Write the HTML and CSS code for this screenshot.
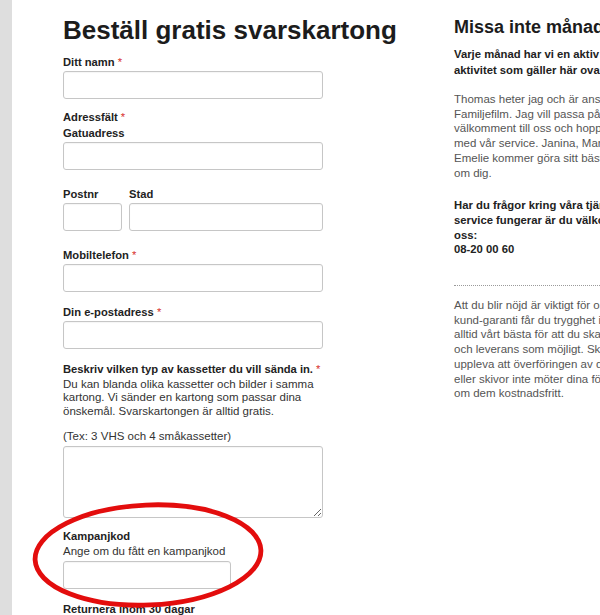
FILE: index.html
```html
<!DOCTYPE html>
<html lang="sv">

<head>
    <meta charset="UTF-8">
    <meta name="viewport" content="width=device-width, initial-scale=1.0">
    <title>Beställ gratis svarskartong</title>
    <link rel="stylesheet" href="styles.css">
</head>

<body>
    <div class="page">

        <!-- Formulär -->
        <div class="form-col">
            <h1>Beställ gratis svarskartong</h1>
            <form>
                <div class="field">
                    <label for="namn">Ditt namn <span class="req">*</span></label>
                    <input type="text" id="namn" class="wide">
                </div>

                <div class="field field-address">
                    <label>Adressfält <span class="req">*</span></label>
                    <label for="gata" class="sub-label">Gatuadress</label>
                    <input type="text" id="gata" class="wide">
                </div>

                <div class="field field-row">
                    <div class="col">
                        <label for="postnr">Postnr</label>
                        <input type="text" id="postnr" class="short">
                    </div>
                    <div class="col">
                        <label for="stad">Stad</label>
                        <input type="text" id="stad" class="city">
                    </div>
                </div>

                <div class="field field-mobile">
                    <label for="mobil">Mobiltelefon <span class="req">*</span></label>
                    <input type="text" id="mobil" class="wide">
                </div>

                <div class="field field-email">
                    <label for="epost">Din e-postadress <span class="req">*</span></label>
                    <input type="text" id="epost" class="wide">
                </div>

                <div class="field">
                    <label for="kassetter">Beskriv vilken typ av kassetter du vill sända in. <span class="req">*</span></label>
                    <p class="help">Du kan blanda olika kassetter och bilder i samma kartong. Vi sänder en kartong som passar dina önskemål. Svarskartongen är alltid gratis.</p>
                    <p class="help help-example">(Tex: 3 VHS och 4 småkassetter)</p>
                    <textarea id="kassetter"></textarea>
                </div>

                <div class="field field-campaign">
                    <label for="kampanj">Kampanjkod</label>
                    <p class="help help-hint">Ange om du fått en kampanjkod</p>
                    <input type="text" id="kampanj" class="code">

                    <!-- Röd markering runt kampanjkoden -->
                    <svg class="circle-mark" width="236" height="110" viewBox="0 0 236 110">
                        <ellipse cx="117" cy="55" rx="113" ry="50" fill="none" stroke="#e30d0d" stroke-width="4.8" transform="rotate(-2.5 117 55)" />
                    </svg>
                </div>

                <div class="field">
                    <label for="retur">Returnera inom 30 dagar</label>
                    <input type="text" id="retur" class="wide">
                </div>
            </form>
        </div>

        <!-- Sidokolumn -->
        <div class="side-col">
            <h2>Missa inte månadens erbjudande</h2>
            <p class="lead">Varje månad har vi en aktiv kampanj eller en<br>aktivitet som gäller här ovan.</p>
            <p class="text">Thomas heter jag och är ansvarig för<br>Familjefilm. Jag vill passa på att hälsa dig<br>välkomment till oss och hoppas att du blir nöjd<br>med vår service. Janina, Maria och<br>Emelie kommer göra sitt bästa för att ta hand<br>om dig.</p>
            <p class="lead contact">Har du frågor kring våra tjänster eller hur vår<br>service fungerar är du välkommen att kontakta<br>oss:<br>08-20 00 60</p>
            <div class="guarantee">
                <p class="text">Att du blir nöjd är viktigt för oss. Med vår<br>kund-garanti får du trygghet i att vi gör<br>alltid vårt bästa för att du skall få så bra kvalitet<br>och leverans som möjligt. Skulle du<br>uppleva att överföringen av dina kassetter<br>eller skivor inte möter dina förväntningar gör vi<br>om dem kostnadsfritt.</p>
            </div>
        </div>

    </div>
</body>

</html>
```

FILE: styles.css
```css
html,
body {
    margin: 0;
    height: 100%;
    overflow: hidden;
}

body {
    background-color: #dedede;
    font-family: "Liberation Sans", Arial, sans-serif;
    color: #222;
}

.page {
    display: flex;
    margin-left: 12px;
    padding-left: 51px;
    min-height: 100%;
    background-color: #fff;
}

/* Formulär */
.form-col {
    width: 370px;
    flex-shrink: 0;
}

    .form-col h1 {
        margin: 15px 0 10px;
        font-size: 26px;
        line-height: 30px;
        color: #1c1c1c;
    }

.field {
    margin-bottom: 11px;
}

    .field label {
        display: block;
        margin-bottom: 2px;
        font-size: 11.2px;
        line-height: 14px;
        font-weight: bold;
        color: #222;
    }

    .field .sub-label {
        margin-top: 2px;
    }

.req {
    color: #d8332f;
    font-weight: normal;
}

.field-address,
.field-row {
    margin-bottom: 17px;
}

.field-mobile,
.field-email {
    margin-bottom: 13px;
}

.field-row {
    display: flex;
    gap: 7px;
}

.help {
    margin: 1px 0 0;
    width: 262px;
    font-size: 11.5px;
    line-height: 13.3px;
    color: #333;
}

.help-example {
    margin-top: 12px;
    margin-bottom: 3px;
}

.help-hint {
    margin-top: 2px;
    margin-bottom: 3px;
}

input[type="text"],
textarea {
    display: block;
    box-sizing: border-box;
    height: 28px;
    padding: 4px;
    border: 1px solid #c6c6c6;
    border-radius: 3px;
    background-color: #fff;
    box-shadow: inset 0 1px 1px rgba(0, 0, 0, 0.04);
    font-family: inherit;
    font-size: 12px;
}

.wide {
    width: 260px;
}

.short {
    width: 59px;
}

.city {
    width: 194px;
}

.code {
    width: 168px;
}

textarea {
    width: 260px;
    height: 72px;
    resize: vertical;
}

.field-campaign {
    position: relative;
    margin-bottom: 13px;
}

.circle-mark {
    position: absolute;
    top: -29px;
    left: -32px;
    pointer-events: none;
}

/* Sidokolumn */
.side-col {
    margin-left: 21px;
    width: 300px;
    flex-shrink: 0;
}

    .side-col h2 {
        margin: 16px 0 8px;
        font-size: 18px;
        line-height: 22px;
        white-space: nowrap;
        color: #1c1c1c;
    }

    .side-col p {
        margin: 0;
        white-space: nowrap;
    }

.lead {
    font-size: 11.3px;
    line-height: 16px;
    font-weight: bold;
    color: #222;
}

.text {
    margin-top: 14px !important;
    font-size: 11.5px;
    line-height: 14.7px;
    color: #555;
}

.contact {
    margin-top: 18px !important;
    line-height: 14.7px;
}

.guarantee {
    margin-top: 28px;
    padding-top: 1px;
    border-top: 1px dotted #9a9a9a;
}

    .guarantee .text {
        margin-top: 11px !important;
    }
```
